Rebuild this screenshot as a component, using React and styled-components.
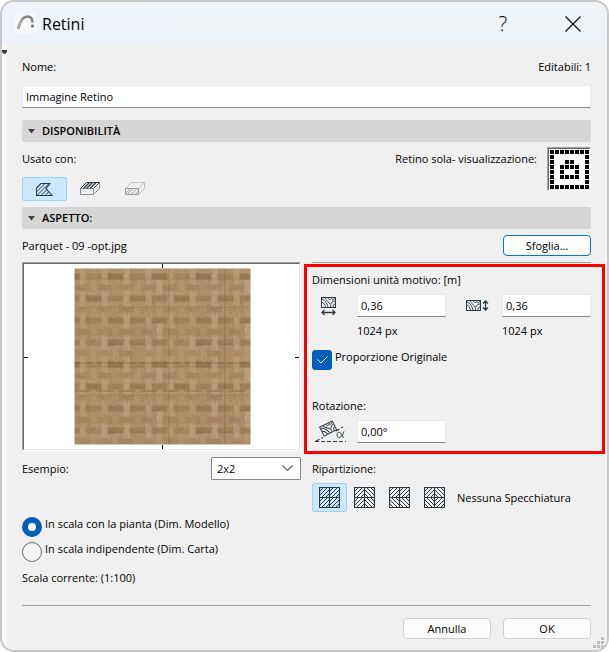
import React, {useState} from 'react';
import styled, {createGlobalStyle, css} from 'styled-components';

const GlobalStyle = createGlobalStyle`
    * {
        box-sizing: border-box;
    }

    body {
        margin: 0;
        background: #fff;
        color: #000;
        font: 11px/16px "Open Sans", "Noto Sans", sans-serif;
    }

    button, input, select {
        font: inherit;
        color: inherit;
    }

    svg {
        display: block;
    }
`;

const Window = styled.main`
    position: relative;
    display: flex;
    flex-direction: column;
    min-height: 100vh;
    border: 2px solid #c8c8c8;
    border-radius: 14px;
    background: #f0f0f0;
    overflow: hidden;
`;

const TitleBar = styled.header`
    display: flex;
    align-items: center;
    height: 43px;
    padding: 0 10px 0 13px;
    background: linear-gradient(90deg, #eef3fb, #eef3f7 40%);
`;

const Title = styled.h1`
    flex: 1;
    margin: 0 0 0 6px;
    font-size: 16px;
    line-height: 24px;
    font-weight: 400;
`;

const TitleButton = styled.button`
    display: grid;
    place-items: center;
    width: 48px;
    height: 32px;
    margin-left: 22px;
    padding: 0;
    border: 0;
    background: none;
    font-size: 20px;
    font-weight: 300;
`;

const Content = styled.div`
    display: flex;
    flex: 1;
`;

const SideStrip = styled.div`
    width: 5px;
    padding-top: 5px;
    background: #f7f7f7;
`;

const Form = styled.form`
    flex: 1;
    min-width: 0;
    padding: 14px 16px 11px 15px;
`;

const Row = styled.div`
    display: flex;
    align-items: center;
    justify-content: space-between;
`;

const TextInput = styled.input`
    display: block;
    width: 100%;
    height: 23px;
    padding: 0 3px;
    border: 1px solid #e9e9e9;
    border-bottom-color: #868686;
    border-radius: 1px;
    background: #fff;
    outline: none;
`;

const NameInput = styled(TextInput)`
    margin: 10px 0 12px;
`;

const SectionHeader = styled.h2`
    display: flex;
    align-items: center;
    gap: 6px;
    height: 22px;
    margin: 0;
    padding-left: 5px;
    border-radius: 2px;
    background: #d6d6d6;
    font-size: 11px;
    font-weight: 600;
`;

const Availability = styled.div`
    display: flex;
    align-items: flex-start;
    justify-content: space-between;
    padding: 5px 0 6px;
`;

const UsedWith = styled.div`
    padding-top: 4px;
`;

const ToolGroup = styled.div`
    display: flex;
    margin-top: 10px;
`;

const ToolButton = styled.button`
    display: grid;
    place-items: center;
    width: 45px;
    height: 24px;
    padding: 0;
    border: 1px solid transparent;
    border-radius: 2px;
    background: none;
    ${props => props.$active && css`
        border-color: #99d1ff;
        background: #cce8ff;
    `}
`;

const TileButton = styled(ToolButton)`
    width: 35px;
    height: 29px;
`;

const ScreenOnly = styled.div`
    display: flex;
    gap: 10px;

    span {
        padding-top: 4px;
    }
`;

const Sunken = styled.div`
    border: 1px solid;
    border-color: #a0a0a0 #fff #fff #a0a0a0;
    background: #fff;

    > svg {
        border: 1px solid;
        border-color: #696969 #e3e3e3 #e3e3e3 #696969;
    }
`;

const FileRow = styled(Row)`
    padding: 6px 0;
`;

const PushButton = styled.button`
    width: 88px;
    height: 21px;
    padding: 0;
    border: 1px solid ${props => (props.$primary ? '#0078d4' : '#d0d0d0')};
    border-radius: 4px;
    background: #fdfdfd;
    line-height: 16px;
`;

const Columns = styled.div`
    display: grid;
    grid-template-columns: 1fr 1fr;
    gap: 11px;
`;

const SampleRow = styled(Row)`
    margin: 6px 0 37px;
`;

const SelectBox = styled.div`
    display: grid;
    align-items: center;
    width: 90px;

    > * {
        grid-area: 1 / 1;
    }

    svg {
        justify-self: end;
        margin-right: 8px;
        pointer-events: none;
    }
`;

const Select = styled.select`
    appearance: none;
    width: 100%;
    height: 23px;
    padding: 0 5px;
    border: 1px solid #868686;
    border-radius: 1px;
    background: #fff;
`;

const Choice = styled.label`
    display: flex;
    align-items: flex-start;
    gap: 3px;
    height: 20px;
    margin-bottom: 5px;
    line-height: 14px;
`;

const Radio = styled.input`
    appearance: none;
    width: 20px;
    height: 20px;
    margin: 0;
    border: 1px solid #6b6b6b;
    border-radius: 50%;
    background: #f5f5f5;

    &:checked {
        border: 6px solid #005fb8;
        background: #fff;
    }
`;

const CheckHolder = styled.span`
    display: grid;

    > * {
        grid-area: 1 / 1;
    }

    svg {
        place-self: center;
        pointer-events: none;
    }
`;

const Checkbox = styled.input`
    appearance: none;
    width: 20px;
    height: 20px;
    margin: 0;
    border: 1px solid #6b6b6b;
    border-radius: 3px;
    background: #f5f5f5;

    &:checked {
        border-color: #005fb8;
        background: #005fb8;
    }
`;

const Rule = styled.hr`
    height: 1px;
    margin: 0;
    border: 0;
    background: #a0a0a0;
`;

const Highlight = styled.section`
    margin: 1px -14px 0 -8px;
    padding: 5px 11px 8px 5px;
    border: 3px solid #ff0000;
`;

const Dimensions = styled.div`
    display: grid;
    grid-template-columns: 1fr 1fr;
    gap: 11px;
    margin: 6px 0 11px;
`;

const Field = styled.div`
    display: grid;
    grid-template-columns: 45px 1fr;
    align-items: center;
    row-gap: 6px;

    small {
        grid-column: 2;
        font-size: 11px;
    }
`;

const Rotation = styled.div`
    display: grid;
    grid-template-columns: 1fr 1fr;
    gap: 11px;
    margin-top: 6px;
`;

const RotationTitle = styled.div`
    margin-top: 28px;
`;

const IconSlot = styled.label`
    padding-left: ${props => props.$inset || 0}px;
`;

const Tiling = styled.div`
    display: flex;
    align-items: center;
    margin-top: 6px;

    span {
        margin-left: 5px;
    }
`;

const TilingTitle = styled.div`
    margin-top: 7px;
`;

const ScaleNote = styled.div`
    margin: 8px 0 19px;
`;

const Footer = styled.footer`
    display: flex;
    justify-content: flex-end;
    gap: 12px;
    margin-top: 12px;
`;

const Grip = styled.div`
    position: absolute;
    right: 3px;
    bottom: 2px;
`;

const INK = '#2b3a42';

function Logo() {
    return (
        <svg width="21" height="21" viewBox="0 0 21 21">
            <rect width="21" height="21" rx="2" fill="#f7f8fa"/>
            <path d="M3 16C5 8 8 3.500 12.500 3.500C16 3.500 17.500 6 17.500 9.500" fill="none" stroke="#85878b" strokeWidth="2.600"/>
            <path d="M3 16C4 12 5.500 9 7.500 6.500" fill="none" stroke="#aaacb0" strokeWidth="2.600"/>
            <rect x="16" y="11.500" width="3" height="3" rx="1" fill="#75777b"/>
        </svg>
    );
}

function Triangle() {
    return (
        <svg width="9" height="5" viewBox="0 0 9 5"><path d="M1 0H8L4.500 4.500Z" fill="#404040"/></svg>
    );
}

// slab drawing, hatched on top or on the front face
function SlabIcon({front}) {
    const top = front ? '#c4c4c4' : INK;
    const face = front ? '#9b9b9b' : '#8b9296';
    return (
        <svg width="20" height="14" viewBox="0 0 20 14" fill="none" strokeWidth="1">
            <path d="M.5 6.500L6.500 .5H19.500L13.500 6.500Z" stroke={top}/>
            <path d="M.5 6.500H13.500V12.500H.5Z" stroke={face}/>
            <path d="M13.500 12.500L19.500 6.500V.5" stroke={front ? '#c4c4c4' : face}/>
            {front
                ? <path d="M1 11L5 7M2 12.500L8 6.500M6 12.500L12 6.500M10 12.500L13.500 9" stroke={face}/>
                : <path d="M3.500 6.500L9.500 .5M6.500 6.500L12.500 .5M10 6.500L16 .5" stroke={top} strokeWidth="1.300"/>}
        </svg>
    );
}

function FillIcon() {
    return (
        <svg width="17" height="13" viewBox="0 0 17 13" fill="none" stroke={INK}>
            <path d="M.5 12.500V5L5 .5H14L10 5.500L16 12.500Z" strokeWidth="1.100"/>
            <path d="M1 8.500L9 .5M1 12.500L13 .5M5 12.500L11 6.500M9 12.500L13 8.500"/>
        </svg>
    );
}

const LOCK_ROWS = ['########', '#......#', '#..##..#', '#.####.#', '#.#..#.#', '#.####.#', '#......#', '########'];

function PatternSwatch() {
    return (
        <svg width="42" height="42" viewBox="0 0 40 40" shapeRendering="crispEdges">
            {LOCK_ROWS.map((row, y) => row.split('').map((c, x) => (
                c === '#' && <rect key={`${x}-${y}`} x={x * 5 + 1} y={y * 5 + 1} width="4" height="4"/>
            )))}
        </svg>
    );
}

// repeatable noise so that the wood grain does not change between renders
function makeRandom(seed) {
    let s = seed;
    return () => {
        s = (s * 16807) % 2147483647;
        return s / 2147483647;
    };
}

const tint = (v, a) => (v < 0 ? `rgba(105,75,38,${-v * a})` : `rgba(200,180,154,${v * a})`);

function buildParquet() {
    const rnd = makeRandom(4711);
    // strip offsets inside one 22px weave unit
    const at = n => Math.floor(n / 4) * 22 + [0, 5, 11, 16][n % 4];
    const parts = [];
    const add = (i, j, w, h, v) => {
        const x = at(i);
        const y = at(j);
        [0, -88].forEach(ox => [0, -88].forEach(oy => {
            parts.push({x: x + ox, y: y + oy, w: at(i + w) - x, h: at(j + h) - y, fill: tint(v, 0.6)});
        }));
    };
    for (let j = 0; j < 4; j++) {
        for (let i = 0; i < 4; i++) {
            add(i * 4 + 2, j * 4 + 1, 3, 1, -0.25 - rnd() * 0.35);
            add(i * 4 + 4, j * 4 + 3, 3, 1, -0.05 - rnd() * 0.25);
            add(i * 4 + 1, j * 4, 1, 3, i === 2 ? 0.65 : 0.15 + rnd() * 0.45);
            add(i * 4 + 3, j * 4 + 2, 1, 3, i === 3 && j % 2 === 0 ? 0.7 : rnd() * 0.3 - 0.05);
        }
    }
    const grain = [];
    for (let n = 0; n < 1000; n++) {
        const upright = rnd() > 0.5;
        const len = 1 + Math.floor(rnd() * 4);
        grain.push({
            x: Math.floor(rnd() * 88),
            y: Math.floor(rnd() * 88),
            w: upright ? 1 : len,
            h: upright ? len : 1,
            fill: tint(rnd() * 2 - 1, 0.24),
        });
    }
    return parts.concat(grain);
}

const PARQUET = buildParquet();

function ParquetPreview() {
    return (
        <svg width="100%" height="187" role="img" aria-label="Parquet">
            <defs>
                <pattern id="parquet" width="88" height="88" patternUnits="userSpaceOnUse">
                    <rect width="88" height="88" fill="#ae8f69"/>
                    <g shapeRendering="crispEdges">
                        {PARQUET.map((p, n) => <rect key={n} x={p.x} y={p.y} width={p.w} height={p.h} fill={p.fill}/>)}
                    </g>
                    <path d="M0 10.500H88M0 38.500H88M0 66.500H88" stroke="#80623a" strokeOpacity=".25"/>
                </pattern>
            </defs>
            <svg x="50%" y="50%" overflow="visible">
                <g transform="translate(-87 -88)">
                    <rect width="176" height="176" fill="url(#parquet)"/>
                    <path d="M94.500 0V176M150.500 0V176" stroke="#80623a" strokeOpacity=".5"/>
                    <path d="M0 94.500H176M0 122.500H176" stroke="#6b4e28" strokeOpacity=".5" strokeDasharray="17 5"/>
                </g>
            </svg>
            <g fill="#000" shapeRendering="crispEdges">
                <rect x="50%" y="0" width="1" height="4"/>
                <rect x="50%" y="181" width="1" height="4"/>
                <rect x="0" y="93" width="4" height="1"/>
                <svg x="100%" y="93" overflow="visible"><rect x="-4" width="4" height="1"/></svg>
            </g>
        </svg>
    );
}

function WoodBlock() {
    return (
        <g fill="none" stroke={INK}>
            <rect x=".5" y=".5" width="14" height="10"/>
            <path
                d="M1 2C4 3 6 6 7 10M1 5C3 6 4 8 4.500 10M4 1C5 3 7 4 9 7M7 1C8 3 10 3 11 1M14 4C11 4 9 7 9.500 10M14 7C12.500 7 12 8.500 12 10M14 1.500L11 3"
                strokeWidth=".9"
            />
        </g>
    );
}

function WidthIcon() {
    return (
        <svg width="16" height="18" viewBox="0 0 16 18">
            <WoodBlock/>
            <path d="M1 15.500H14M3.500 13L1 15.500L3.500 18M11.500 13L14 15.500L11.500 18" fill="none" stroke={INK} strokeWidth="1.300"/>
        </svg>
    );
}

function HeightIcon() {
    return (
        <svg width="23" height="12" viewBox="0 0 23 12">
            <WoodBlock/>
            <path d="M19.500 1V10M17 3.500L19.500 1L22 3.500M17 7.500L19.500 10L22 7.500" fill="none" stroke={INK} strokeWidth="1.300"/>
        </svg>
    );
}

function AngleIcon() {
    return (
        <svg width="33" height="23" viewBox="0 0 33 23">
            <g transform="translate(5 7) rotate(-27)"><WoodBlock/></g>
            <path d="M1 21.500H32" stroke={INK} strokeWidth="1.200" strokeDasharray="4 2"/>
            <path d="M2 21L9 17.500M22 11L29 7" stroke={INK} strokeWidth="1.200" strokeDasharray="4 2"/>
            <path d="M30 11.500C28 17 26 18 24.500 17.500C22.500 17 22.500 12.500 25 12C27.500 12 27.500 17.500 30 17.500" fill="none" stroke={INK}/>
        </svg>
    );
}

// each quarter leans up (/) or down (\)
function TileIcon({quarters}) {
    return (
        <svg width="21" height="21" viewBox="0 0 21 21" fill="none" stroke={INK}>
            {quarters.split('').map((q, n) => {
                const x = (n % 2) * 10 + 0.5;
                const y = Math.floor(n / 2) * 10 + 0.5;
                const flip = q === 'd' ? ' translate(10 0) scale(-1 1)' : '';
                return (
                    <path key={n} transform={`translate(${x} ${y})${flip}`} d="M0 4L4 0M0 8L8 0M2 10L10 2M6 10L10 6"/>
                );
            })}
            <path d="M.5 .5H20.500V20.500H.5ZM10.500 0V21M0 10.500H21" strokeWidth="1.200"/>
        </svg>
    );
}

const TILINGS = [
    {id: 'none', label: 'Nessuna Specchiatura', quarters: 'uuuu'},
    {id: 'x', label: 'Specchiatura X', quarters: 'udud'},
    {id: 'y', label: 'Specchiatura Y', quarters: 'uudd'},
    {id: 'xy', label: 'Specchiatura X-Y', quarters: 'uddu'},
];

const GRIP_DOTS = [[8, 0], [4, 4], [8, 4], [0, 8], [4, 8], [8, 8]];

function App() {
    const [tiling, setTiling] = useState(TILINGS[0]);

    return (
        <>
            <GlobalStyle/>
            <Window>
                <TitleBar>
                    <Logo/>
                    <Title>Retini</Title>
                    <TitleButton type="button">?</TitleButton>
                    <TitleButton type="button" aria-label="Chiudi">
                        <svg width="16" height="16" viewBox="0 0 16 16">
                            <path d="M.5 .5L15.500 15.500M15.500 .5L.5 15.500" stroke="#111" strokeWidth="1.300"/>
                        </svg>
                    </TitleButton>
                </TitleBar>

                <Content>
                    <SideStrip>
                        <svg width="5" height="4" viewBox="0 0 5 4"><path d="M0 0H5V2L3 4H2L0 2Z" fill="#404040"/></svg>
                    </SideStrip>

                    <Form onSubmit={event => event.preventDefault()}>
                        <Row>
                            <label htmlFor="fillName">Nome:</label>
                            <span>Editabili: 1</span>
                        </Row>
                        <NameInput id="fillName" defaultValue="Immagine Retino"/>

                        <SectionHeader><Triangle/>DISPONIBILITÀ</SectionHeader>
                        <Availability>
                            <UsedWith>
                                <div>Usato con:</div>
                                <ToolGroup>
                                    <ToolButton type="button" aria-label="Retini 2D" $active><FillIcon/></ToolButton>
                                    <ToolButton type="button" aria-label="Retini di copertura"><SlabIcon/></ToolButton>
                                    <ToolButton type="button" aria-label="Retini di sezione" disabled><SlabIcon front/></ToolButton>
                                </ToolGroup>
                            </UsedWith>
                            <ScreenOnly>
                                <span>Retino sola- visualizzazione:</span>
                                <Sunken><PatternSwatch/></Sunken>
                            </ScreenOnly>
                        </Availability>

                        <SectionHeader><Triangle/>ASPETTO:</SectionHeader>
                        <FileRow>
                            <span>Parquet - 09 -opt.jpg</span>
                            <PushButton type="button" $primary>Sfoglia...</PushButton>
                        </FileRow>

                        <Columns>
                            <div>
                                <Sunken><ParquetPreview/></Sunken>
                                <SampleRow>
                                    <label htmlFor="sample">Esempio:</label>
                                    <SelectBox>
                                        <Select id="sample" defaultValue="2x2">
                                            <option>1x1</option>
                                            <option>2x2</option>
                                            <option>4x4</option>
                                        </Select>
                                        <svg width="11" height="7" viewBox="0 0 11 7">
                                            <path d="M.5 .5L5.500 5.500L10.500 .5" fill="none" stroke="#606060" strokeWidth="1.200"/>
                                        </svg>
                                    </SelectBox>
                                </SampleRow>
                                <Choice>
                                    <Radio type="radio" name="scale" defaultChecked/>
                                    In scala con la pianta (Dim. Modello)
                                </Choice>
                                <Choice>
                                    <Radio type="radio" name="scale"/>
                                    In scala indipendente (Dim. Carta)
                                </Choice>
                                <ScaleNote>Scala corrente: (1:100)</ScaleNote>
                            </div>

                            <div>
                                <Rule/>
                                <Highlight>
                                    <div>Dimensioni unità motivo: [m]</div>
                                    <Dimensions>
                                        <Field>
                                            <IconSlot htmlFor="unitWidth" aria-label="Larghezza" $inset={9}><WidthIcon/></IconSlot>
                                            <TextInput id="unitWidth" defaultValue="0,36"/>
                                            <small>1024 px</small>
                                        </Field>
                                        <Field>
                                            <IconSlot htmlFor="unitHeight" aria-label="Altezza" $inset={9}><HeightIcon/></IconSlot>
                                            <TextInput id="unitHeight" defaultValue="0,36"/>
                                            <small>1024 px</small>
                                        </Field>
                                    </Dimensions>
                                    <Choice>
                                        <CheckHolder>
                                            <Checkbox type="checkbox" defaultChecked/>
                                            <svg width="11" height="8" viewBox="0 0 11 8">
                                                <path d="M.5 3.500L4 7L10.500 .5" fill="none" stroke="#fff"/>
                                            </svg>
                                        </CheckHolder>
                                        Proporzione Originale
                                    </Choice>
                                    <RotationTitle>Rotazione:</RotationTitle>
                                    <Rotation>
                                        <Field>
                                            <IconSlot htmlFor="rotation" aria-label="Angolo" $inset={2}><AngleIcon/></IconSlot>
                                            <TextInput id="rotation" defaultValue="0,00°"/>
                                        </Field>
                                    </Rotation>
                                </Highlight>
                                <TilingTitle>Ripartizione:</TilingTitle>
                                <Tiling>
                                    {TILINGS.map(t => (
                                        <TileButton
                                            key={t.id}
                                            type="button"
                                            aria-label={t.label}
                                            $active={t.id === tiling.id}
                                            onClick={() => setTiling(t)}
                                        >
                                            <TileIcon quarters={t.quarters}/>
                                        </TileButton>
                                    ))}
                                    <span>{tiling.label}</span>
                                </Tiling>
                            </div>
                        </Columns>

                        <Rule/>
                        <Footer>
                            <PushButton type="button">Annulla</PushButton>
                            <PushButton type="submit">OK</PushButton>
                        </Footer>
                    </Form>
                </Content>

                <Grip>
                    <svg width="11" height="11" viewBox="0 0 11 11" fill="#bdbdbd">
                        {GRIP_DOTS.map(([x, y]) => <rect key={`${x}-${y}`} x={x} y={y} width="3" height="3"/>)}
                    </svg>
                </Grip>
            </Window>
        </>
    );
}

export default App;
